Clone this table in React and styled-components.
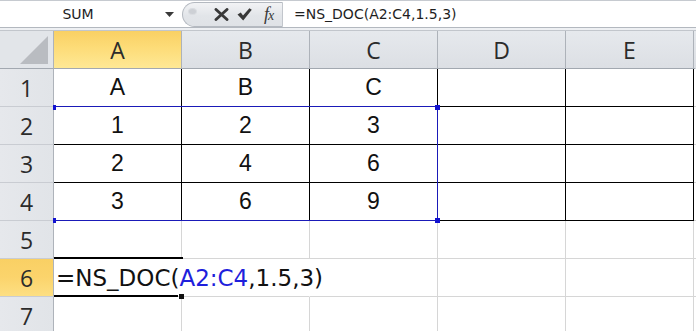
import React from "react";
import styled, { createGlobalStyle, css } from "styled-components";

const GlobalStyle = createGlobalStyle`
  html, body {
    margin: 0;
    padding: 0;
    background: #ffffff;
    overflow: hidden;
  }
  body {
    font-family: "Open Sans", "Liberation Sans", sans-serif;
  }
`;

const COLS = ["A", "B", "C", "D", "E"];

// sheet contents, rows 1..7
const rows = [
  ["A", "B", "C", "", ""],
  ["1", "2", "3", "", ""],
  ["2", "4", "6", "", ""],
  ["3", "6", "9", "", ""],
  ["", "", "", "", ""],
  ["", "", "", "", ""],
  ["", "", "", "", ""],
];

const ACTIVE_ROW = 6;
const BOXED_ROWS = 4;

const App = () => {
  return (
    <Window>
      <GlobalStyle />
      <FormulaBar>
        <NameBox>
          <NameText>SUM</NameText>
          <DropButton>
            <svg width="9" height="5" viewBox="0 0 9 5">
              <path d="M0 0 L9 0 L4.5 5 Z" fill="#3a3a3a" />
            </svg>
          </DropButton>
        </NameBox>
        <ButtonStrip>
          <Grip />
          <BarIcon>
            <svg width="15" height="13" viewBox="0 0 15 13">
              <path
                d="M2 1.5 L13 11.5 M13 1.5 L2 11.5"
                stroke="#383838"
                strokeWidth="2.9"
                strokeLinecap="round"
              />
            </svg>
          </BarIcon>
          <BarIcon>
            <svg width="15" height="13" viewBox="0 0 15 13">
              <path
                d="M0.5 6.5 L3.8 4.4 L6 7.4 L12.4 0.2 L14.8 1.8 L6.2 12.6 Z"
                fill="#383838"
              />
            </svg>
          </BarIcon>
          <FxLabel>
            f<sub>x</sub>
          </FxLabel>
        </ButtonStrip>
        <FormulaInput>=NS_DOC(A2:C4,1.5,3)</FormulaInput>
      </FormulaBar>
      <BarGap />
      <Sheet>
        <Corner>
          <CornerMark />
        </Corner>
        {COLS.map((c, i) => (
          <ColHeader key={c} $active={i === 0}>
            {c}
          </ColHeader>
        ))}
        <ColHeader $tail />

        {rows.map((r, ri) => {
          const n = ri + 1;
          return (
            <React.Fragment key={n}>
              <RowHeader $active={n === ACTIVE_ROW}>{n}</RowHeader>
              {r.map((v, ci) => (
                <Cell
                  key={ci}
                  $boxed={n <= BOXED_ROWS}
                  $overflow={n === ACTIVE_ROW && ci < 2}
                  $front={n === ACTIVE_ROW && ci === 0}
                >
                  {n === ACTIVE_ROW && ci === 0 ? (
                    <EditText>
                      =NS_DOC(<Ref>A2:C4</Ref>,1.5,3)
                    </EditText>
                  ) : (
                    v
                  )}
                </Cell>
              ))}
              <Cell $tail />
            </React.Fragment>
          );
        })}

        <Selection>
          <Handle style={{ left: -1, top: -2, width: 3 }} />
          <Handle style={{ right: -3, top: -2 }} />
          <Handle style={{ left: -1, bottom: -3, width: 3 }} />
          <Handle style={{ right: -3, bottom: -3 }} />
        </Selection>
        <ActiveCell>
          <FillHandle />
        </ActiveCell>
      </Sheet>
    </Window>
  );
};

export default App;

const Window = styled.div`
  width: 696px;
  height: 331px;
  overflow: hidden;
  display: flex;
  flex-direction: column;
  background: #ffffff;
`;

const FormulaBar = styled.div`
  display: flex;
  height: 28px;
  box-sizing: border-box;
  border-top: 1px solid #c6cad0;
  border-bottom: 1px solid #b3b8bf;
  background: #ffffff;
`;

const NameBox = styled.div`
  display: flex;
  align-items: center;
  width: 182px;
  flex-shrink: 0;
`;

const NameText = styled.div`
  flex: 1;
  text-align: center;
  font-family: "DejaVu Sans", "Open Sans", sans-serif;
  font-size: 14px;
  color: #1e1e1e;
  padding-right: 2px;
  line-height: 26px;
`;

const DropButton = styled.div`
  width: 22px;
  display: flex;
  justify-content: center;
  align-items: center;
  padding-right: 2px;
`;

const ButtonStrip = styled.div`
  display: flex;
  align-items: center;
  width: 101px;
  flex-shrink: 0;
  box-sizing: border-box;
  margin: 1px 0 0;
  height: 25px;
  border: 1px solid #b4b9c0;
  border-right-color: #c2c6cc;
  border-radius: 13px 0 0 13px;
  background: linear-gradient(#f2f3f5, #e2e5e9 55%, #dfe2e6);
  padding-left: 5px;
`;

const Grip = styled.div`
  width: 7px;
  height: 5px;
  border-radius: 50%;
  background: #cdd0d5;
  border: 1px solid #dadde1;
  margin-right: 13px;
  margin-top: -6px;
`;

const BarIcon = styled.div`
  width: 23px;
  display: flex;
  align-items: center;
  justify-content: center;
`;

const FxLabel = styled.div`
  width: 26px;
  text-align: center;
  font-family: "Liberation Serif", "DejaVu Serif", serif;
  font-style: italic;
  font-size: 18px;
  color: #3a3a3a;
  line-height: 20px;
  sub {
    font-size: 14px;
    vertical-align: baseline;
    margin-left: -1px;
  }
`;

const FormulaInput = styled.div`
  flex: 1;
  padding-left: 11px;
  font-family: "DejaVu Sans", "Open Sans", sans-serif;
  font-size: 14px;
  line-height: 26px;
  color: #1e1e1e;
  white-space: nowrap;
`;

const BarGap = styled.div`
  height: 3px;
  flex-shrink: 0;
  background: #eef0f3;
`;

const Sheet = styled.div`
  position: relative;
  display: grid;
  grid-template-columns: 54px repeat(5, 128px) 1fr;
  grid-auto-rows: 38px;
  border-top: 1px solid #c2c6cc;
  margin-top: -1px;
`;

const headerFont = css`
  font-family: "Open Sans", "Liberation Sans", sans-serif;
  font-size: 23px;
  color: #2b2b2b;
  display: flex;
  align-items: center;
  justify-content: center;
  box-sizing: border-box;
`;

const activeHeader = css`
  background: linear-gradient(#f9d064, #fddc78 45%, #fee895);
`;

const Corner = styled.div`
  position: relative;
  box-sizing: border-box;
  background: #e2e5e9;
  border-right: 1px solid #aeb3ba;
  border-bottom: 1px solid #a2a8b0;
`;

const CornerMark = styled.div`
  position: absolute;
  right: 5px;
  bottom: 4px;
  width: 28px;
  height: 28px;
  background: #b9bcc1;
  clip-path: polygon(100% 0, 100% 100%, 0 100%);
`;

const ColHeader = styled.div`
  ${headerFont};
  background: linear-gradient(#e6e9ed, #dcdfe4);
  border-right: 1px solid ${(p) => (p.$tail ? "transparent" : "#adb2b9")};
  border-bottom: 1px solid #a2a8b0;
  ${(p) => p.$active && activeHeader};
`;

const RowHeader = styled.div`
  ${headerFont};
  background: linear-gradient(90deg, #e6e8ec, #e1e4e8);
  border-right: 1px solid #aeb3ba;
  border-bottom: 1px solid #c9ccd2;
  ${(p) =>
    p.$active &&
    css`
      background: linear-gradient(#f9d064, #fbd46c 50%, #fddf83);
    `};
`;

const Cell = styled.div`
  box-sizing: border-box;
  display: flex;
  align-items: center;
  justify-content: center;
  font-family: "Liberation Sans", Arial, sans-serif;
  font-size: 23px;
  color: #111111;
  background: #ffffff;
  border-right: 1px solid ${(p) => (p.$boxed ? "#000000" : "#d6d6d6")};
  border-bottom: 1px solid ${(p) => (p.$boxed ? "#000000" : "#d6d6d6")};
  ${(p) =>
    p.$overflow &&
    css`
      border-right-color: transparent;
    `};
  ${(p) =>
    p.$tail &&
    css`
      border-right: none;
      border-bottom-color: #d6d6d6;
    `};
  ${(p) =>
    p.$front &&
    css`
      position: relative;
      z-index: 1;
      justify-content: flex-start;
      overflow: visible;
      background: transparent;
    `};
`;

const EditText = styled.span`
  font-family: "DejaVu Sans", "Open Sans", sans-serif;
  font-size: 23px;
  color: #111111;
  white-space: nowrap;
  padding-left: 2px;
`;

const Ref = styled.span`
  color: #1f1fdc;
`;

const Selection = styled.div`
  position: absolute;
  top: 75px;
  left: 54px;
  width: 384px;
  height: 115px;
  box-sizing: border-box;
  border: 1px solid #1a1ab8;
  border-left: none;
  pointer-events: none;
  z-index: 2;
`;

const Handle = styled.div`
  position: absolute;
  width: 5px;
  height: 5px;
  background: #1212d0;
`;

const ActiveCell = styled.div`
  position: absolute;
  top: 226px;
  left: 54px;
  width: 129px;
  height: 40px;
  box-sizing: border-box;
  border-top: 2px solid #000000;
  pointer-events: none;
  z-index: 2;
  &::after {
    content: "";
    position: absolute;
    left: 0;
    bottom: 0;
    width: 124px;
    height: 2px;
    background: #000000;
  }
`;

const FillHandle = styled.div`
  position: absolute;
  left: 125px;
  bottom: -2px;
  width: 5px;
  height: 5px;
  background: #111111;
`;
